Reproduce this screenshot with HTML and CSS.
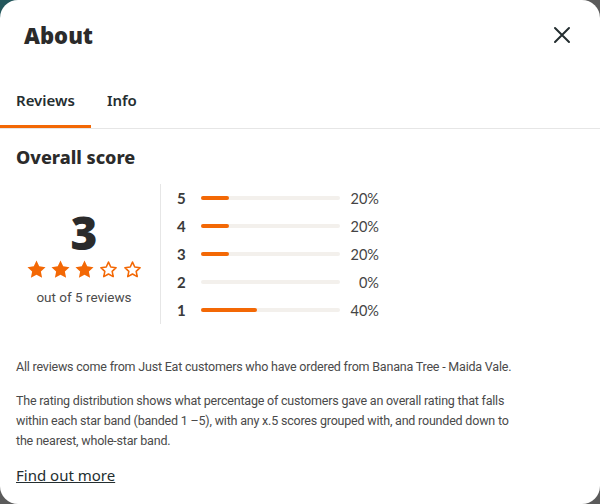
FILE: index.html
```html
<!DOCTYPE html>
<html lang="en">
  <head>
    <meta charset="UTF-8" />
    <meta name="viewport" content="width=device-width, initial-scale=1.0" />
    <title>About - Banana Tree</title>
    <link rel="stylesheet" href="styles.css">
  </head>
  <body>
    <div class="modal">
      <header class="modal-head">
        <h2>About</h2>
        <button class="close" aria-label="Close">
          <svg width="20" height="20" viewBox="0 0 20 20">
            <path d="M3 3 L17 17 M17 3 L3 17" stroke="#242e30" stroke-width="2" stroke-linecap="round" />
          </svg>
        </button>
      </header>

      <nav class="tabs">
        <a class="tab active" href="#">Reviews</a>
        <a class="tab" href="#">Info</a>
      </nav>

      <section class="content">
        <h3>Overall score</h3>
        <div class="score">
          <div class="summary">
            <span class="big">3</span>
            <div class="stars">
              <svg viewBox="0 0 24 24"><path class="on" d="M12 1.8l3.1 6.6 7.2.9-5.3 5 1.4 7.1L12 17.9l-6.4 3.5 1.4-7.1-5.3-5 7.2-.9z" /></svg>
              <svg viewBox="0 0 24 24"><path class="on" d="M12 1.8l3.1 6.6 7.2.9-5.3 5 1.4 7.1L12 17.9l-6.4 3.5 1.4-7.1-5.3-5 7.2-.9z" /></svg>
              <svg viewBox="0 0 24 24"><path class="on" d="M12 1.8l3.1 6.6 7.2.9-5.3 5 1.4 7.1L12 17.9l-6.4 3.5 1.4-7.1-5.3-5 7.2-.9z" /></svg>
              <svg viewBox="0 0 24 24"><path class="off" d="M12 3.5l2.6 5.6 6.1.8-4.5 4.2 1.2 6L12 17.1l-5.4 3 1.2-6-4.5-4.2 6.1-.8z" /></svg>
              <svg viewBox="0 0 24 24"><path class="off" d="M12 3.5l2.6 5.6 6.1.8-4.5 4.2 1.2 6L12 17.1l-5.4 3 1.2-6-4.5-4.2 6.1-.8z" /></svg>
            </div>
            <span class="count">out of 5 reviews</span>
          </div>

          <ul class="dist">
            <li><span class="num">5</span><span class="bar"><i style="width: 20%"></i></span><span class="pct">20%</span></li>
            <li><span class="num">4</span><span class="bar"><i style="width: 20%"></i></span><span class="pct">20%</span></li>
            <li><span class="num">3</span><span class="bar"><i style="width: 20%"></i></span><span class="pct">20%</span></li>
            <li><span class="num">2</span><span class="bar"><i style="width: 0%"></i></span><span class="pct">0%</span></li>
            <li><span class="num">1</span><span class="bar"><i style="width: 40%"></i></span><span class="pct">40%</span></li>
          </ul>
        </div>

        <p class="note">All reviews come from Just Eat customers who have ordered from Banana Tree - Maida Vale.</p>
        <p class="note">The rating distribution shows what percentage of customers gave an overall rating that falls within each star band (banded 1 –5), with any x.5 scores grouped with, and rounded down to the nearest, whole-star band.</p>
        <a class="more" href="#">Find out more</a>
      </section>
    </div>
  </body>
</html>
```

FILE: styles.css
```css
* {
  box-sizing: border-box;
}
body {
  margin: 0;
  height: 504px;
  overflow: hidden;
  background: linear-gradient(135deg, #24575c 0, #24575c 30px, #5b5b5b 31px);
  font-family: "Noto Sans", sans-serif;
  color: #242e30;
}
.modal {
  width: 600px;
  height: 504px;
  background: #fff;
  border-radius: 18px;
  overflow: hidden;
}
.modal-head {
  display: flex;
  align-items: center;
  justify-content: space-between;
  padding: 21px 24px 27px 24px;
}
.modal-head h2 {
  margin: 0;
  font-size: 22px;
  line-height: 28px;
  font-weight: 900;
  color: #2b2b2b;
}
.close {
  border: none;
  background: none;
  padding: 0;
  margin-right: 4px;
  width: 20px;
  height: 20px;
  cursor: pointer;
}
.tabs {
  display: flex;
  border-bottom: 1px solid #e6e6e6;
}
.tab {
  padding: 14px 16px 15px;
  font-size: 15px;
  line-height: 20px;
  font-weight: 600;
  color: #242e30;
  text-decoration: none;
  border-bottom: 3px solid transparent;
}
.tab.active {
  border-bottom-color: #f36805;
}
.content {
  padding: 16px;
}
.content h3 {
  margin: 0 0 15px;
  font-size: 18px;
  line-height: 24px;
  font-weight: 800;
  color: #2b2b2b;
}
.score {
  display: flex;
}
.summary {
  width: 144px;
  padding-right: 8px;
  padding-top: 4px;
  display: flex;
  flex-direction: column;
  align-items: center;
  justify-content: center;
}
.big {
  font-size: 46px;
  line-height: 50px;
  font-weight: 900;
  color: #2b2b2b;
}
.stars {
  display: flex;
  gap: 3px;
  margin: 2px 0 8px;
}
.stars svg {
  width: 21px;
  height: 21px;
}
.stars .on {
  fill: #f36805;
}
.stars .off {
  fill: none;
  stroke: #f36805;
  stroke-width: 1.8;
  stroke-linejoin: round;
}
.count {
  font-family: Roboto, sans-serif;
  font-size: 13.5px;
  line-height: 18px;
  color: #4c4c4c;
}
.dist {
  list-style: none;
  margin: 0;
  padding: 0 0 0 16px;
  border-left: 1px solid #e6e6e6;
}
.dist li {
  display: flex;
  align-items: center;
  height: 28px;
}
.num {
  width: 24px;
  font-family: Lato, sans-serif;
  font-size: 15px;
  font-weight: 700;
  color: #3a3a3a;
}
.bar {
  width: 139px;
  height: 4px;
  border-radius: 2px;
  background: #f3f0ec;
}
.bar i {
  display: block;
  height: 4px;
  border-radius: 2px;
  background: #f36805;
}
.pct {
  width: 39px;
  text-align: right;
  font-family: Lato, sans-serif;
  font-size: 14.5px;
  color: #444;
}
.note {
  max-width: 500px;
  margin: 33px 0 0;
  font-family: Roboto, sans-serif;
  font-size: 12.5px;
  letter-spacing: -0.2px;
  line-height: 20px;
  color: #4a4a4a;
}
.note + .note {
  margin-top: 14px;
}
.more {
  display: inline-block;
  margin-top: 14px;
  font-size: 15px;
  line-height: 20px;
  color: #242e30;
}
```
